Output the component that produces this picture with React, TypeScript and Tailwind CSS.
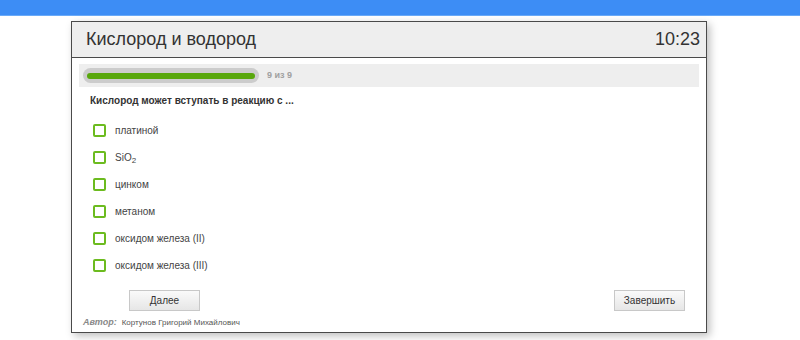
const options = [
  { id: 1, label: 'платиной' },
  { id: 2, label: 'SiO', sub: '2' },
  { id: 3, label: 'цинком' },
  { id: 4, label: 'метаном' },
  { id: 5, label: 'оксидом железа (II)' },
  { id: 6, label: 'оксидом железа (III)' },
];

export default function App() {
  return (
    <div className="min-h-[340px] bg-white font-['Liberation_Sans',Arial,sans-serif]">
      <div className="h-[16px] bg-[#3d8df5] border-b border-[#6aaaf8]" />

      <div className="ml-[71px] mt-[5px] w-[636px] border border-[#4a4a4a] bg-white shadow-[3px_3px_8px_rgba(0,0,0,0.25)]">
        <div className="flex h-[36px] items-center justify-between border-b border-[#4a4a4a] bg-[#eeeeee] pl-[14px] pr-[6px]">
          <h1 className="text-[18px] text-[#333]">Кислород и водород</h1>
          <span className="text-[18px] text-[#333]">10:23</span>
        </div>

        <div className="mx-[7px] mt-[6px] flex h-[23px] items-center bg-[#eeeeee] pl-[4px]">
          <div className="flex h-[15px] w-[176px] items-center rounded-full bg-[#cccccc] px-[4px]">
            <div className="h-[6px] w-full rounded-full bg-[#58a70c]" />
          </div>
          <span className="ml-[8px] text-[9px] font-bold text-[#a0a0a0]">9 из 9</span>
        </div>

        <p className="ml-[18px] mt-[6px] text-[10px] font-bold text-[#333]">
          Кислород может вступать в реакцию с ...
        </p>

        <ul className="ml-[21px] mt-[16px] flex flex-col gap-[14px]">
          {options.map((o) => (
            <li key={o.id} className="flex h-[13px] items-center">
              <span className="h-[13px] w-[13px] rounded-[2px] border-2 border-[#6cbb1f] bg-white" />
              <span className="ml-[9px] text-[10px] text-[#444]">
                {o.label}
                {o.sub && <sub className="text-[8px]">{o.sub}</sub>}
              </span>
            </li>
          ))}
        </ul>

        <div className="mt-[18px] flex justify-between pl-[57px] pr-[21px]">
          <button className="h-[21px] w-[71px] border border-[#c8c8c8] bg-gradient-to-b from-[#fafafa] to-[#e6e6e6] text-[10px] text-[#333]">
            Далее
          </button>
          <button className="h-[21px] w-[71px] border border-[#c8c8c8] bg-gradient-to-b from-[#fafafa] to-[#e6e6e6] text-[10px] text-[#333]">
            Завершить
          </button>
        </div>

        <div className="mb-[2px] ml-[11px] mt-[5px] flex items-center">
          <span className="text-[9px] font-bold italic text-[#888]">Автор:</span>
          <span className="ml-[5px] text-[8px] text-[#555]">Кортунов Григорий Михайлович</span>
        </div>
      </div>
    </div>
  );
}
